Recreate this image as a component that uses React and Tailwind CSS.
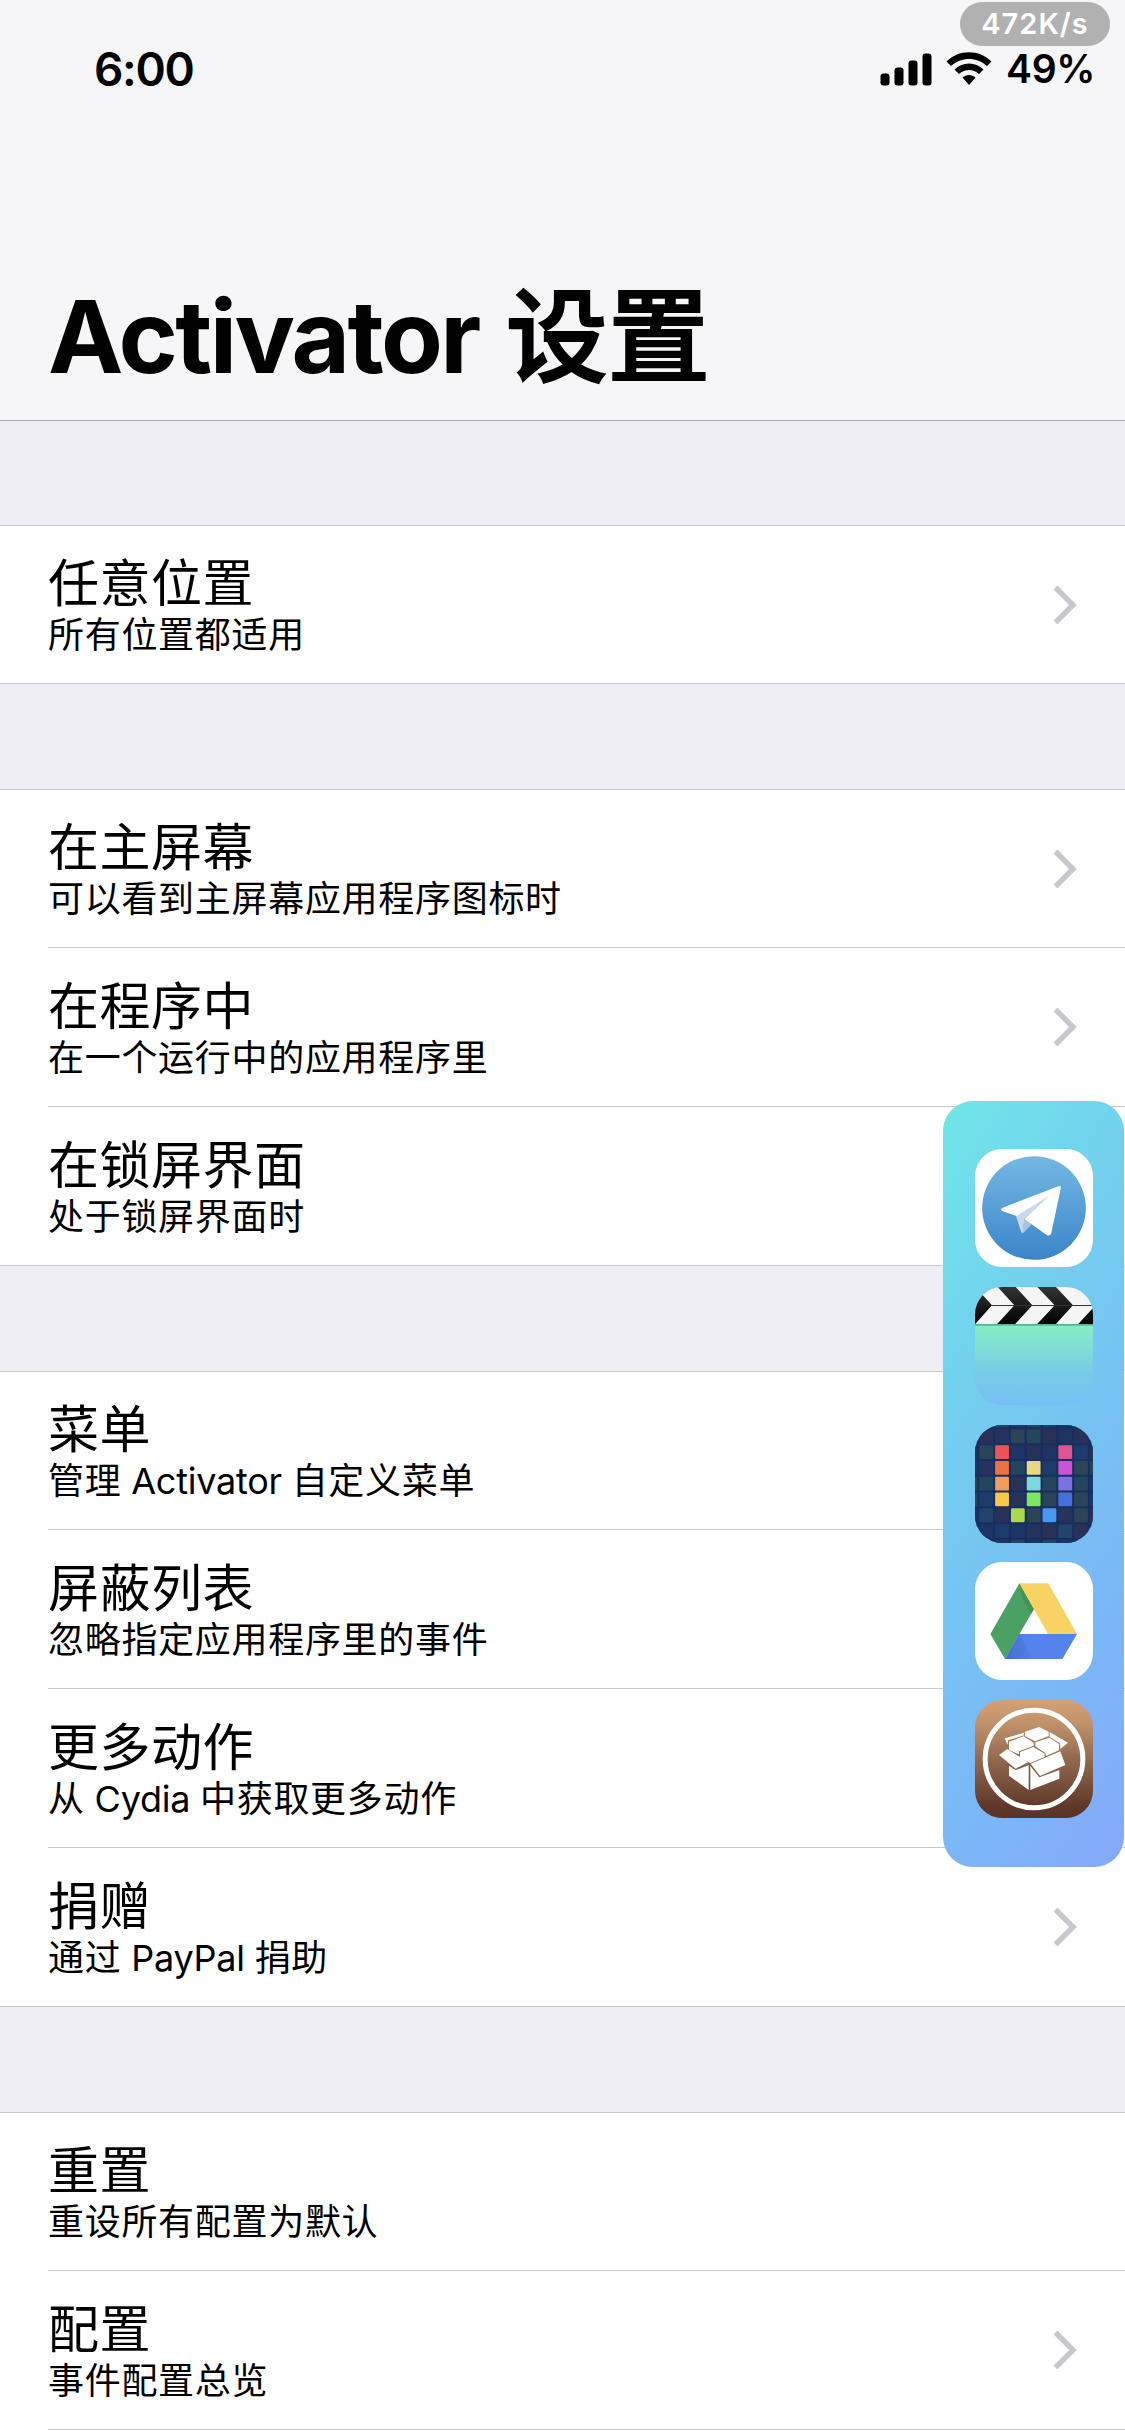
const groups = [
  [{ title: "任意位置", sub: "所有位置都适用", arrow: true }],
  [
    { title: "在主屏幕", sub: "可以看到主屏幕应用程序图标时", arrow: true },
    { title: "在程序中", sub: "在一个运行中的应用程序里", arrow: true },
    { title: "在锁屏界面", sub: "处于锁屏界面时", arrow: true },
  ],
  [
    { title: "菜单", sub: "管理 Activator 自定义菜单", arrow: true },
    { title: "屏蔽列表", sub: "忽略指定应用程序里的事件", arrow: true },
    { title: "更多动作", sub: "从 Cydia 中获取更多动作", arrow: true },
    { title: "捐赠", sub: "通过 PayPal 捐助", arrow: true },
  ],
  [
    { title: "重置", sub: "重设所有配置为默认", arrow: false },
    { title: "配置", sub: "事件配置总览", arrow: true },
    { title: "", sub: "", arrow: false },
  ],
];

function Chevron() {
  return (
    <svg className="mr-12 h-[40px] w-6 shrink-0" viewBox="0 0 24 40" fill="none">
      <path d="M2.5 2.5 20 20 2.5 37.5" stroke="#c7c7cc" strokeWidth="5.4" />
    </svg>
  );
}

// Latin runs are set slightly tighter than the surrounding Chinese text.
function MixedText({ text }) {
  return text.split(/( [A-Za-z]+ )/).map((part, i) => (
    <span key={i} className={i % 2 ? "tracking-[-0.25px]" : "tracking-[0.7px]"}>
      {part}
    </span>
  ));
}

function Row({ item, first, last }) {
  return (
    <div className={`h-[159px] shrink-0 bg-white ${first ? "border-t border-[#c8c7cc]" : ""} ${last ? "border-b" : "pl-12"} border-[#c8c7cc]`}>
      <div className={`flex h-full items-center justify-between ${last ? "pl-12" : "border-b border-[#c8c7cc]"}`}>
        <div className="flex flex-col pt-[5px] whitespace-nowrap">
          <span className="text-[51px] leading-[56px] tracking-[0.5px]">{item.title}</span>
          <span className="text-[36px] leading-[46px]"><MixedText text={item.sub} /></span>
        </div>
        {item.arrow && <Chevron />}
      </div>
    </div>
  );
}

function StatusBar() {
  return (
    <div className="flex h-[138px] items-start justify-between pt-[44px] pr-[30px] pl-[94px]">
      <span className="text-[46px] leading-[50px] font-semibold tracking-[-1.3px]">6:00</span>
      <div className="flex items-center">
        <svg className="h-[33px] w-[52px]" viewBox="0 0 52 33">
          <rect x="0.500" y="20.500" width="9" height="12" rx="3" />
          <rect x="14.500" y="14.500" width="9" height="18" rx="3" />
          <rect x="28.500" y="7.500" width="9" height="25" rx="3" />
          <rect x="42.500" y="0.500" width="9" height="32" rx="3" />
        </svg>
        <svg className="ml-[14px] h-[34px] w-[46px]" viewBox="0 0 46 34">
          <path d="M0.500 9.500C12.500-3 33.500-3 45.500 9.500L41 14C31 4.500 15 4.500 5 14Z" />
          <path d="M8.500 17.500C16.500 9.500 29.500 9.500 37.500 17.500L33 22C27 16.500 19 16.500 13 22Z" />
          <path d="M16.500 25.500C20.500 22 25.500 22 29.500 25.500L23 33Z" />
        </svg>
        <span className="ml-[14px] text-[39px] leading-[50px] font-semibold tracking-[-0.4px]">49%</span>
      </div>
    </div>
  );
}

function TelegramIcon() {
  return (
    <svg viewBox="0 0 354 354" className="h-full w-full bg-white">
      <defs>
        <linearGradient id="tg" x1="0" y1="0" x2="0" y2="1">
          <stop offset="0" stopColor="#74b8e2" />
          <stop offset="1" stopColor="#3a85c9" />
        </linearGradient>
      </defs>
      <circle cx="177" cy="177" r="155.500" fill="url(#tg)" />
      <path d="M122 199 226 137 148 209 144 252Q140 254 138 247Z" fill="#c8d9ed" />
      <path d="M148 209 170 226 146 251Q142 253 143 247Z" fill="#a9c4e2" />
      <path d="M250 112Q259 109 257 119L229 252Q226 263 215 258L148 210 222 140 125 201 83 187Q73 182 83 176Z" fill="#fff" />
    </svg>
  );
}

function ClapperIcon() {
  return (
    <svg viewBox="0 0 354 354" className="h-full w-full">
      <defs>
        <linearGradient id="clapBody" x1="0" y1="0" x2="0" y2="1">
          <stop offset="0" stopColor="#84edc4" />
          <stop offset="0.12" stopColor="#82e9ca" />
          <stop offset="0.6" stopColor="#78cbe6" />
          <stop offset="1" stopColor="#77bff7" />
        </linearGradient>
        <linearGradient id="clapBlack" gradientUnits="userSpaceOnUse" x1="0" y1="0" x2="0" y2="112">
          <stop offset="0" stopColor="#343534" />
          <stop offset="1" stopColor="#000" />
        </linearGradient>
        <clipPath id="lowerHalf"><rect y="57" width="354" height="60" /></clipPath>
      </defs>
      <rect y="112" width="354" height="242" fill="url(#clapBody)" />
      <rect width="354" height="112" fill="#f5f5f5" />
      <g fill="url(#clapBlack)">
        <path d="M-53 0H1L51 55 0 112H-54L-3 55Z" />
        <path d="M68 0H122L172 55 120 112H66L118 55Z" />
        <path d="M187 0H243L294 55 242 112H186L239 55Z" />
        <path d="M308 0H364L416 55 364 112H309L361 55Z" clipPath="url(#lowerHalf)" />
      </g>
      <rect y="54" x="50" width="304" height="3" fill="#333" />
      <rect y="111" width="354" height="5" fill="#5fae93" />
    </svg>
  );
}

const dimColors = ["#1d3566", "#28325f", "#2a3159", "#2b4458", "#24465c", "#1c3c6b", "#21446a"];
const litCells = {
  "1-1": "#ef5257", "5-1": "#dc5590",
  "1-2": "#ec7243", "3-2": "#e7d980", "5-2": "#cd51d3",
  "1-3": "#f19c5a", "3-3": "#7bd8df", "5-3": "#7d71e2",
  "1-4": "#f7c646", "3-4": "#7de761", "5-4": "#466fd9",
  "2-5": "#acd94c", "4-5": "#4998f0",
};
// Indices into dimColors; the outer ring is cut off by the icon's edge.
const dimGrid = [
  [0, 0, 4, 5, 4, 5, 0, 0, 0],
  [0, 2, 1, 3, 4, 2, 0, 2, 0],
  [0, 3, 0, 0, 2, 0, 0, 5, 2],
  [0, 1, 0, 4, 0, 5, 0, 3, 3],
  [4, 4, 0, 2, 0, 4, 0, 4, 0],
  [3, 5, 0, 1, 0, 3, 0, 3, 0],
  [0, 6, 2, 0, 3, 0, 1, 3, 2],
  [0, 0, 5, 0, 1, 2, 6, 2, 0],
  [0, 0, 1, 4, 0, 4, 0, 0, 0],
];

function WorkflowIcon() {
  return (
    <svg viewBox="0 0 354 354" className="h-full w-full bg-[#182e5c]">
      {dimGrid.map((line, r) =>
        line.map((c, k) => (
          <rect
            key={`${k}-${r}`}
            x={13 + (k - 1) * 47.4}
            y={13 + (r - 1) * 47.4}
            width="41.500"
            height="41.500"
            rx="4"
            fill={litCells[`${k - 1}-${r - 1}`] || dimColors[c]}
          />
        ))
      )}
    </svg>
  );
}

function DriveIcon() {
  return (
    <svg viewBox="0 0 354 354" className="h-full w-full bg-white">
      <defs>
        <linearGradient id="blueShade" x1="0" y1="0" x2="1" y2="0">
          <stop offset="0" stopColor="#456fd0" />
          <stop offset="1" stopColor="#5380e8" />
        </linearGradient>
      </defs>
      <path d="M133 64 177 141 90 291 46 216Z" fill="#4ba163" />
      <path d="M133 64 177 141 168 155 142 110Z" fill="#43935b" />
      <path d="M133 64H220L306 216H219Z" fill="#f8d263" />
      <path d="M133 216H306L262 291H90Z" fill="#5583ee" />
      <path d="M133 216 175 291H90Z" fill="url(#blueShade)" />
    </svg>
  );
}

function CydiaIcon() {
  return (
    <svg viewBox="0 0 354 354" className="h-full w-full">
      <defs>
        <linearGradient id="cydia" x1="0" y1="0" x2="0" y2="1">
          <stop offset="0" stopColor="#d3a177" />
          <stop offset="0.2" stopColor="#c0926b" />
          <stop offset="0.5" stopColor="#93694f" />
          <stop offset="0.9" stopColor="#5f3829" />
          <stop offset="1" stopColor="#593325" />
        </linearGradient>
      </defs>
      <rect width="354" height="354" fill="url(#cydia)" />
      <circle cx="177" cy="177" r="146.500" fill="none" stroke="#fff" strokeWidth="15" />
      <g fill="#fff">
        <path d="M150 95 192 81 221 95 221 108 180 124 150 108Z" />
        <path d="M89 115 147 98V106L99 121 98 134Z" />
        <path d="M224 96 279 128 256 147 255 130 224 111Z" />
        <path d="M102 125 146 109 176 128V137L132 154V163L102 150Z" />
        <path d="M181 127 223 113 252 132V151L213 168 211 159 181 139Z" />
        <path d="M135 156 175 141 209 161V171L166 189 135 174Z" />
        <path d="M72 165 97 147 159 187 122 206Z" />
        <path d="M167 191 256 154 271 195 195 228Z" />
        <path d="M102 198 122 210 161 196V270L102 227Z" />
        <path d="M166 198 193 232 253 210V236L166 270Z" />
      </g>
    </svg>
  );
}

const dock = [TelegramIcon, ClapperIcon, WorkflowIcon, DriveIcon, CydiaIcon];

export default function App() {
  return (
    <div className="relative flex h-[2436px] w-[1125px] flex-col overflow-hidden bg-[#efeef4] font-[Inter,'Noto_Sans_CJK_SC',sans-serif] text-black">
      <header className="flex h-[421px] shrink-0 flex-col border-b border-[#a9a9ad] bg-[#f6f6f8]">
        <StatusBar />
        <h1 className="mt-[136px] ml-12 flex items-center gap-[27px] leading-[120px] font-bold whitespace-nowrap">
          <span className="text-[101px] tracking-[-2.6px]">Activator</span>
          <span className="pt-[3px] text-[102px] font-medium [-webkit-text-stroke:2px_black]">设置</span>
        </h1>
      </header>
      <main className="flex flex-col gap-[105px] pt-[104px]">
        {groups.map((rows, g) => (
          <section key={g} className="flex flex-col">
            {rows.map((item, i) => (
              <Row key={i} item={item} first={i === 0} last={i === rows.length - 1} />
            ))}
          </section>
        ))}
      </main>
      <div className="absolute top-[2px] left-[960px] flex h-[44px] w-[150px] items-center justify-center rounded-full bg-[#b1b1b1] text-[29px] font-semibold tracking-[1px] text-white">
        472K/s
      </div>
      <aside className="absolute top-[1101px] left-[943px] flex h-[766px] w-[181px] flex-col items-center gap-[19.750px] rounded-[30px] bg-[linear-gradient(122deg,#6fe6e8,#74cbef_38%,#7ab8f6_72%,#86a8fb)] pt-[48px]">
        {dock.map((Icon, i) => (
          <div key={i} className="h-[118px] w-[118px] shrink-0 overflow-hidden rounded-[27px]">
            <Icon />
          </div>
        ))}
      </aside>
    </div>
  );
}
